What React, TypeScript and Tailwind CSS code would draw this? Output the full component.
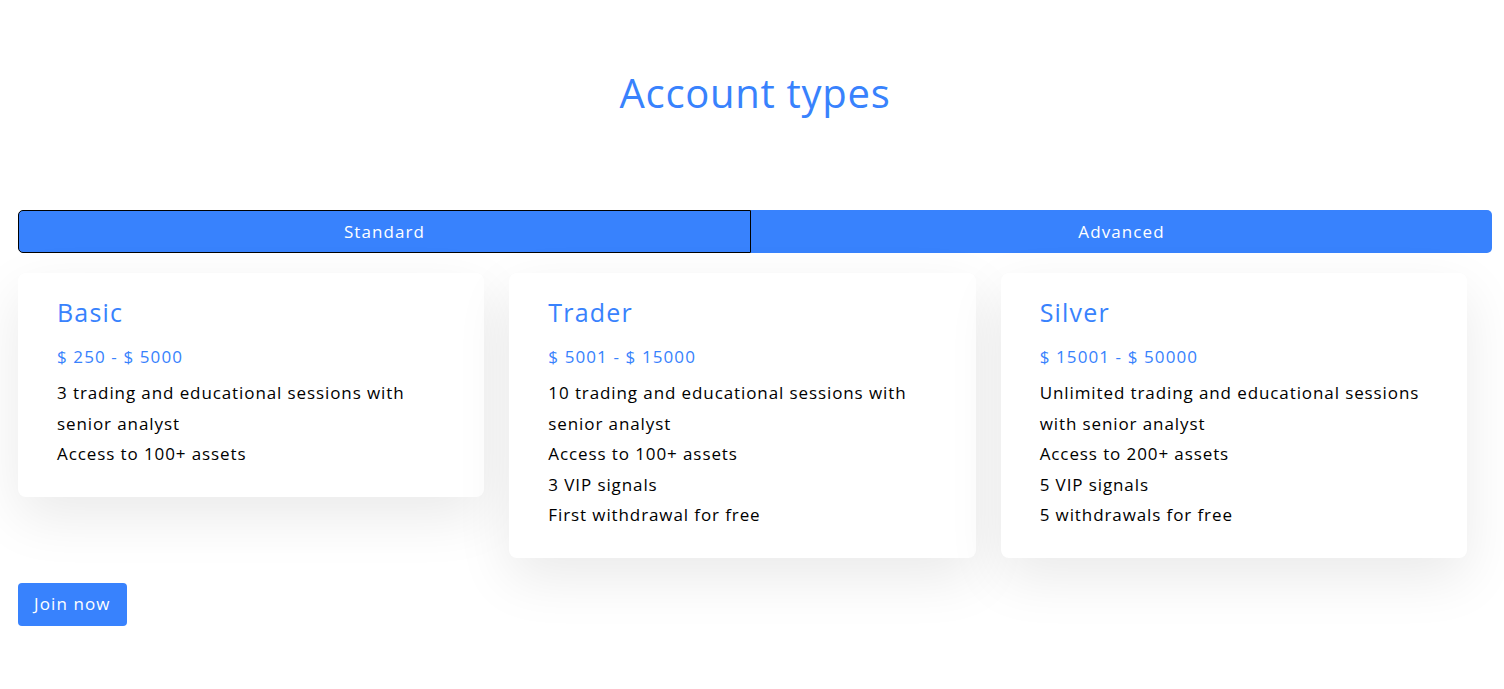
import React, { useState } from 'react';

interface Plan {
    name: string;
    range: string;
    features: string[];
}

const plans: Plan[] = [
    {
        name: 'Basic',
        range: '$ 250 - $ 5000',
        features: ['3 trading and educational sessions with senior analyst', 'Access to 100+ assets'],
    },
    {
        name: 'Trader',
        range: '$ 5001 - $ 15000',
        features: [
            '10 trading and educational sessions with senior analyst',
            'Access to 100+ assets',
            '3 VIP signals',
            'First withdrawal for free',
        ],
    },
    {
        name: 'Silver',
        range: '$ 15001 - $ 50000',
        features: [
            'Unlimited trading and educational sessions with senior analyst',
            'Access to 200+ assets',
            '5 VIP signals',
            '5 withdrawals for free',
        ],
    },
];

export default function App() {
    const [tab, setTab] = useState<'standard' | 'advanced'>('standard');

    return (
        <div className="min-h-screen bg-white font-['Open_Sans',sans-serif] text-black">
            <div className="pl-[18px] pr-[12px] pt-[68px] pb-[60px]">
                <h1 className="text-center text-[40px] leading-[50px] tracking-[0.7px] text-[#3882fd]">
                    Account types
                </h1>

                {/* Tabs */}
                <div className="mt-[92px] grid h-[43px] grid-cols-[733px_1fr]">
                    <button
                        onClick={() => setTab('standard')}
                        className={`rounded-l-[5px] bg-[#3882fd] text-[17px] tracking-[1.1px] text-white ${
                            tab === 'standard' ? 'border border-black' : ''
                        }`}
                    >
                        Standard
                    </button>
                    <button
                        onClick={() => setTab('advanced')}
                        className={`rounded-r-[5px] bg-[#3882fd] text-[17px] tracking-[1.1px] text-white ${
                            tab === 'advanced' ? 'border border-black' : ''
                        }`}
                    >
                        Advanced
                    </button>
                </div>

                {/* Plan cards */}
                <div className="mt-5 grid grid-cols-3 items-start">
                    {plans.map((plan) => (
                        <div key={plan.name} className="pr-[25px]">
                            <div className="rounded-[8px] bg-white px-[39px] pt-[25px] pb-[27px] shadow-[0_20px_55px_rgba(0,0,0,0.085)]">
                                <h3 className="text-[25px] leading-[29px] tracking-[1.2px] text-[#3882fd]">
                                    {plan.name}
                                </h3>
                                <p className="mt-[18px] text-[17px] leading-[24px] font-medium tracking-[1.1px] text-[#3882fd]">
                                    {plan.range}
                                </p>
                                <ul className="mt-[9px] text-[17px] leading-[30.5px] tracking-[0.9px]">
                                    {plan.features.map((f) => (
                                        <li key={f}>{f}</li>
                                    ))}
                                </ul>
                            </div>
                        </div>
                    ))}
                </div>

                <button className="mt-[25px] h-[43px] rounded-[4px] bg-[#3882fd] px-4 text-[17px] tracking-[1.1px] text-white">
                    Join now
                </button>
            </div>
        </div>
    );
}
